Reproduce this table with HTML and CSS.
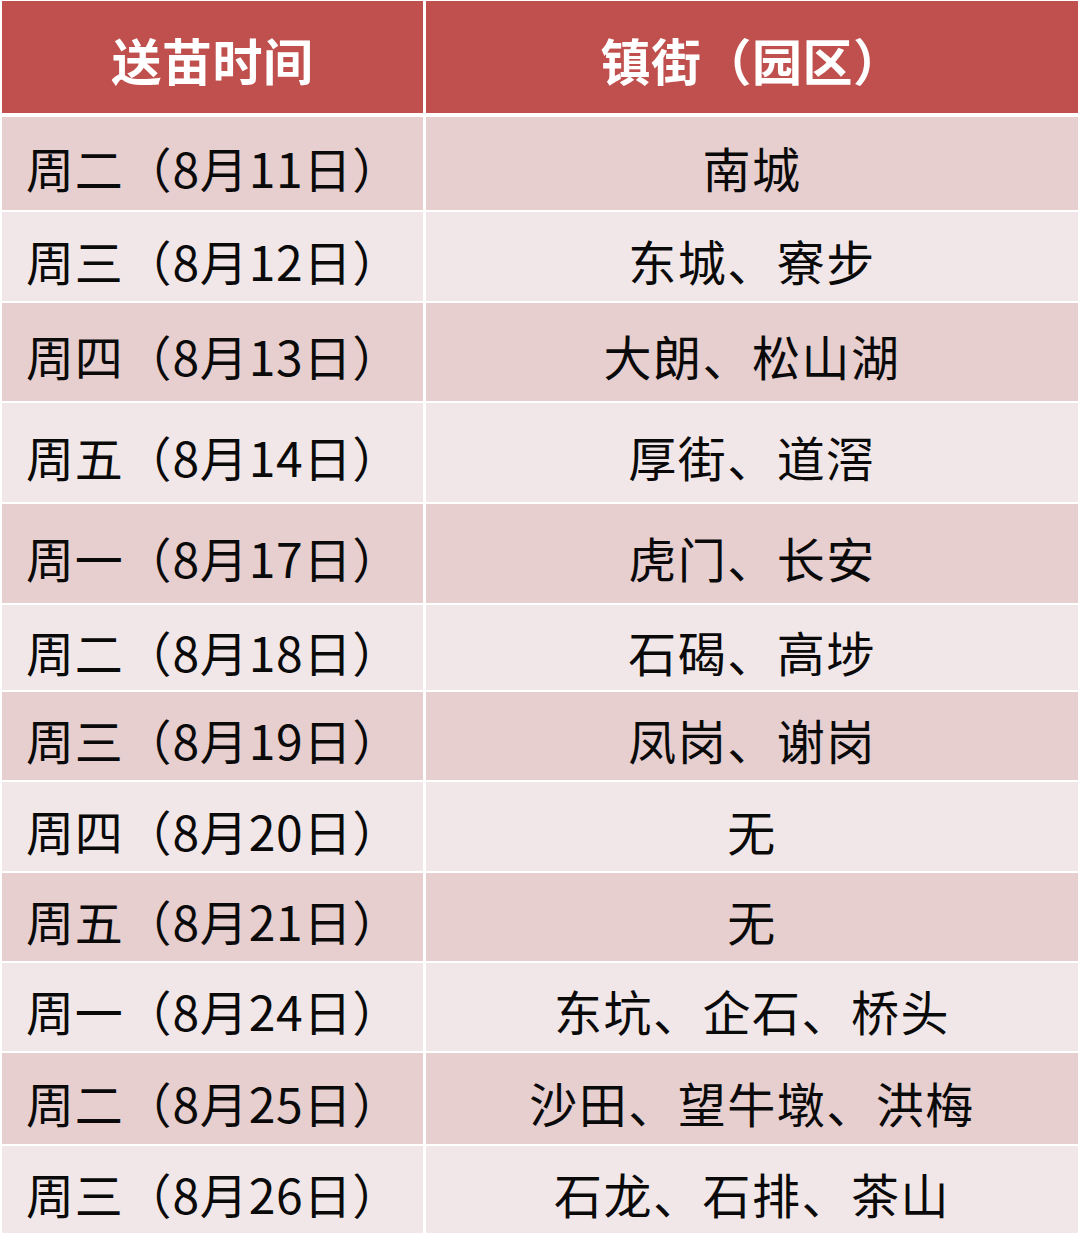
FILE: index.html
```html
<!DOCTYPE html>
<html lang="zh-CN">
<head>
<meta charset="utf-8">
<title>送苗时间</title>
<link rel="stylesheet" href="styles.css">
</head>
<body>
<div class="table">
  <div class="cell head">送苗时间</div>
  <div class="cell head">镇街（园区）</div>

  <div class="cell date dark r1">周二（8月11日）</div>
  <div class="cell town dark r1">南城</div>

  <div class="cell date light r2">周三（8月12日）</div>
  <div class="cell town light r2">东城、寮步</div>

  <div class="cell date dark r3">周四（8月13日）</div>
  <div class="cell town dark r3">大朗、松山湖</div>

  <div class="cell date light r4">周五（8月14日）</div>
  <div class="cell town light r4">厚街、道滘</div>

  <div class="cell date dark r4">周一（8月17日）</div>
  <div class="cell town dark r4">虎门、长安</div>

  <div class="cell date light r6">周二（8月18日）</div>
  <div class="cell town light r6">石碣、高埗</div>

  <div class="cell date dark r7">周三（8月19日）</div>
  <div class="cell town dark r7">凤岗、谢岗</div>

  <div class="cell date light r2">周四（8月20日）</div>
  <div class="cell town light r2">无</div>

  <div class="cell date dark r7">周五（8月21日）</div>
  <div class="cell town dark r7">无</div>

  <div class="cell date light r7">周一（8月24日）</div>
  <div class="cell town light r7">东坑、企石、桥头</div>

  <div class="cell date dark r11">周二（8月25日）</div>
  <div class="cell town dark r11">沙田、望牛墩、洪梅</div>

  <div class="cell date light r12">周三（8月26日）</div>
  <div class="cell town light r12">石龙、石排、茶山</div>
</div>
</body>
</html>
```

FILE: styles.css
```css
html, body {
  margin: 0;
  padding: 0;
  background: #ffffff;
}

body {
  font-family: "Noto Sans CJK SC", "Noto Sans", sans-serif;
  color: #0a0a0a;
}

.table {
  display: grid;
  grid-template-columns: 421px 652px;
  column-gap: 3px;
  row-gap: 2px;
  margin: 1px 0 0 2px;
  width: 1076px;
}

.cell {
  display: flex;
  align-items: center;
  box-sizing: border-box;
  padding-top: 6px;
  font-size: 48px;
  font-weight: 400;
  letter-spacing: 1.5px;
  line-height: 1;
  white-space: nowrap;
}

.head {
  height: 112px;
  margin-bottom: 2px;
  padding-top: 4px;
  background: #c0504d;
  color: #ffffff;
  font-weight: 700;
  font-size: 50px;
  letter-spacing: 0.5px;
  justify-content: center;
}

.date {
  padding-left: 24px;
  letter-spacing: 0.8px;
}

.town {
  justify-content: center;
}

.dark {
  background: #e7cecf;
}

.light {
  background: #f2e7e8;
}

.r1 { height: 93px; }
.r2 { height: 89px; }
.r3 { height: 98px; }
.r4 { height: 99px; }
.r6 { height: 85px; }
.r7 { height: 88px; }
.r11 { height: 91px; }
.r12 { height: 87px; }
```
